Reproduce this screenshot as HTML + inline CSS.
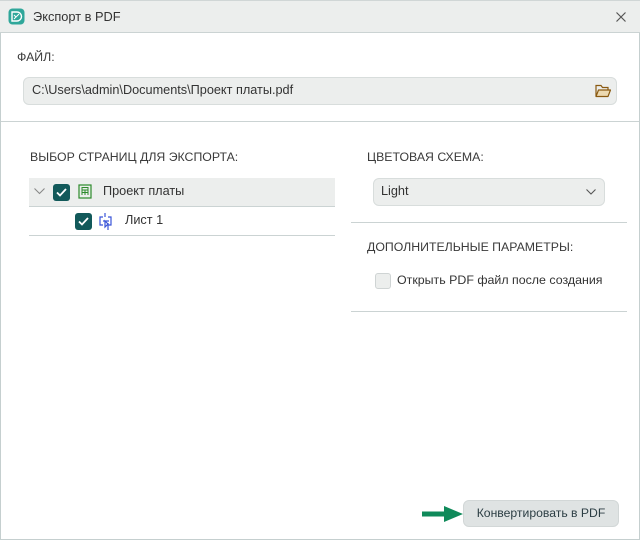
<!DOCTYPE html>
<html><head><meta charset="utf-8"><style>
*{box-sizing:border-box;margin:0;padding:0}
body{width:640px;height:540px;overflow:hidden;background:#fff;font-family:"Liberation Sans",sans-serif;font-size:12.5px;color:#333}
.win{position:absolute;left:0;top:0;width:640px;height:540px;border:1px solid #c5cfcf;border-top:none}
.title{position:absolute;left:0;top:0;width:640px;height:33px;background:#eceeed;border-bottom:1px solid #cbd3d3;border-top:1px solid #d0d6d6}
.abs{position:absolute}
.lbl{position:absolute;font-size:12.3px;color:#3a3a3a}
.hr{position:absolute;height:1px;background:#cbd3d3}
.cb{position:absolute;width:17px;height:17px;border-radius:3px;background:#12595a}
.cb svg{position:absolute;left:2px;top:2px}
</style></head><body>
<div class="win"></div>
<div class="title">
  <svg class="abs" style="left:8px;top:7px" width="17" height="17" viewBox="0 0 17 17"><rect x="0.5" y="0.5" width="16" height="16" rx="4" fill="#2fa79a"/><path d="M4 4h5a4.5 4.5 0 0 1 0 9H4z" fill="none" stroke="#fff" stroke-width="1.4"/><path d="M6 11l5-5M6 7l2 2" stroke="#fff" stroke-width="1"/></svg>
  <div class="abs" style="left:33px;top:8px;font-size:12.8px;color:#333">Экспорт в PDF</div>
  <svg class="abs" style="left:616px;top:11px" width="10" height="10" viewBox="0 0 10 10"><path d="M0.5 0.5l9 9M9.5 0.5l-9 9" stroke="#555" stroke-width="1.2"/></svg>
</div>
<div class="lbl" style="left:17px;top:50px">ФАЙЛ:</div>
<div class="abs" style="left:23px;top:77px;width:594px;height:28px;background:#eceeed;border:1px solid #d8dddc;border-radius:6px"></div>
<div class="abs" style="left:32px;top:83px;font-size:12.7px;color:#333">C:\Users\admin\Documents\Проект платы.pdf</div>
<svg class="abs" style="left:595px;top:84px" width="16" height="14" viewBox="0 0 16 14"><path d="M1 12V1.5h5l1.5 2H13V6" fill="none" stroke="#8a5a10" stroke-width="1.2"/><path d="M1 12.5L3.5 6H15.5L13 12.5z" fill="#ecd9b0" stroke="#8a5a10" stroke-width="1.2" stroke-linejoin="round"/></svg>
<div class="hr" style="left:1px;top:121px;width:638px"></div>
<div class="lbl" style="left:30px;top:150px">ВЫБОР СТРАНИЦ ДЛЯ ЭКСПОРТА:</div>
<div class="abs" style="left:29px;top:178px;width:306px;height:28px;background:#eceeed"></div>
<div class="hr" style="left:29px;top:206px;width:306px"></div>
<div class="hr" style="left:29px;top:235px;width:306px"></div>
<svg class="abs" style="left:34px;top:188px" width="11" height="7" viewBox="0 0 11 7"><path d="M0.5 0.5l5 5 5-5" fill="none" stroke="#888" stroke-width="1.1"/></svg>
<div class="cb" style="left:53px;top:184px"><svg width="13" height="13" viewBox="0 0 13 13"><path d="M2 6.5l3 3 6-6.5" fill="none" stroke="#fff" stroke-width="1.8"/></svg></div>
<svg class="abs" style="left:78px;top:184px" width="14" height="15" viewBox="0 0 14 15"><rect x="1" y="1" width="12" height="13" fill="none" stroke="#2c8a2c" stroke-width="1.2"/><path d="M4 3.5h6M4 6h6M4 8.5h6M4 3v8M7 6v5M10 3v8" stroke="#2c8a2c" stroke-width="1"/></svg>
<div class="abs" style="left:103px;top:184px;font-size:12.7px;color:#333">Проект платы</div>
<div class="cb" style="left:75px;top:213px"><svg width="13" height="13" viewBox="0 0 13 13"><path d="M2 6.5l3 3 6-6.5" fill="none" stroke="#fff" stroke-width="1.8"/></svg></div>
<svg class="abs" style="left:98px;top:212px" width="16" height="18" viewBox="0 0 16 18"><path d="M7 1v4M5 5H2v8h3M10 5h3v8h-3M5 9h6M7 9l3 3-3 3zM10 11v7" fill="none" stroke="#3a55d8" stroke-width="1.2"/></svg>
<div class="abs" style="left:125px;top:213px;font-size:12.7px;color:#333">Лист 1</div>
<div class="lbl" style="left:367px;top:150px">ЦВЕТОВАЯ СХЕМА:</div>
<div class="abs" style="left:373px;top:178px;width:232px;height:28px;background:#eceeed;border:1px solid #d8dddc;border-radius:6px"></div>
<div class="abs" style="left:381px;top:184px;font-size:12.7px;color:#333">Light</div>
<svg class="abs" style="left:586px;top:189px" width="10" height="6" viewBox="0 0 10 6"><path d="M0.5 0.5l4.5 4.5 4.5-4.5" fill="none" stroke="#555" stroke-width="1.1"/></svg>
<div class="hr" style="left:351px;top:222px;width:276px"></div>
<div class="lbl" style="left:367px;top:240px">ДОПОЛНИТЕЛЬНЫЕ ПАРАМЕТРЫ:</div>
<div class="abs" style="left:375px;top:273px;width:16px;height:16px;background:#eceeed;border:1px solid #cfd4d4;border-radius:3px"></div>
<div class="abs" style="left:397px;top:273px;font-size:12.4px;color:#333">Открыть PDF файл после создания</div>
<div class="hr" style="left:351px;top:311px;width:276px"></div>
<svg class="abs" style="left:422px;top:506px" width="42" height="16" viewBox="0 0 42 16"><path d="M0 5.5h22V0l19 8-19 8v-5.5H0z" fill="#0f8a5a"/></svg>
<div class="abs" style="left:463px;top:500px;width:156px;height:27px;background:#dfe3e3;border:1px solid #d2d7d7;border-radius:6px;font-size:12.2px;color:#2c3e44;text-align:center;line-height:25px">Конвертировать в PDF</div>
</body></html>
